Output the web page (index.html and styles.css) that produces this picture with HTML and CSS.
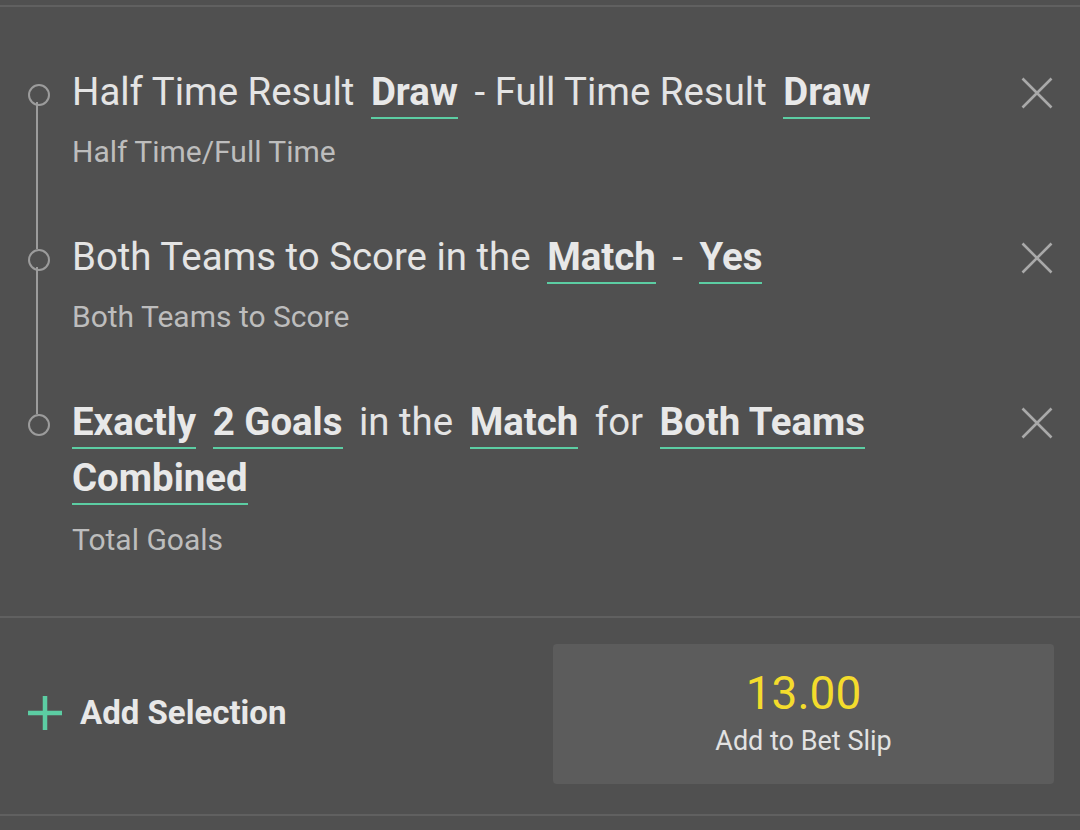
FILE: index.html
```html
<!DOCTYPE html>
<html lang="en">
<head>
<meta charset="utf-8">
<title>Bet Builder</title>
<link rel="stylesheet" href="styles.css">
</head>
<body>
<div class="page">
  <div class="topline"></div>
  <ul class="legs">
    <li class="leg">
      <div class="leg-body">
        <p class="leg-title"><span class="seg">Half Time Result</span><span class="pick">Draw</span><span class="seg">- Full Time Result</span><span class="pick">Draw</span></p>
        <p class="leg-market">Half Time/Full Time</p>
      </div>
      <button class="remove" aria-label="Remove">
        <svg width="32" height="32" viewBox="0 0 32 32"><path d="M1.5 1.5 L30.5 30.5 M30.5 1.5 L1.5 30.5" stroke="#a9a9a9" stroke-width="2.6" fill="none"/></svg>
      </button>
    </li>
    <li class="leg">
      <div class="leg-body">
        <p class="leg-title"><span class="seg">Both Teams to Score in the</span><span class="pick">Match</span><span class="seg">-</span><span class="pick">Yes</span></p>
        <p class="leg-market">Both Teams to Score</p>
      </div>
      <button class="remove" aria-label="Remove">
        <svg width="32" height="32" viewBox="0 0 32 32"><path d="M1.5 1.5 L30.5 30.5 M30.5 1.5 L1.5 30.5" stroke="#a9a9a9" stroke-width="2.6" fill="none"/></svg>
      </button>
    </li>
    <li class="leg leg-tall">
      <div class="leg-body">
        <p class="leg-title"><span class="pick">Exactly</span><span class="pick">2 Goals</span><span class="seg">in the</span><span class="pick">Match</span><span class="seg">for</span><span class="pick">Both Teams Combined</span></p>
        <p class="leg-market">Total Goals</p>
      </div>
      <button class="remove" aria-label="Remove">
        <svg width="32" height="32" viewBox="0 0 32 32"><path d="M1.5 1.5 L30.5 30.5 M30.5 1.5 L1.5 30.5" stroke="#a9a9a9" stroke-width="2.6" fill="none"/></svg>
      </button>
    </li>
  </ul>
  <div class="footer">
    <button class="add-sel">
      <svg class="plus" width="34" height="34" viewBox="0 0 34 34"><path d="M17 0 V34 M0 17 H34" stroke="#5ccda3" stroke-width="4.5" fill="none"/></svg>
      <span>Add Selection</span>
    </button>
    <button class="betslip">
      <span class="odds">13.00</span>
      <span class="betslip-label">Add to Bet Slip</span>
    </button>
  </div>
  <div class="bottomline"></div>
</div>
</body>
</html>
```

FILE: styles.css
```css
* { box-sizing: border-box; }

html, body {
  margin: 0;
  padding: 0;
  background: #505050;
  font-family: Roboto, "Liberation Sans", sans-serif;
}

.page {
  width: 1080px;
  min-height: 830px;
  background: #505050;
  padding-top: 5px;
}

.topline {
  height: 2px;
  background: #606060;
}

.legs {
  list-style: none;
  margin: 0;
  padding: 57px 0 56px 0;
}

.leg {
  position: relative;
  display: flex;
  align-items: flex-start;
  margin-bottom: 57px;
}

.leg:last-child { margin-bottom: 0; }

.leg::before {
  content: "";
  position: absolute;
  left: 28px;
  top: 20px;
  width: 18px;
  height: 18px;
  border: 2px solid #9c9c9c;
  border-radius: 50%;
  background: #505050;
}

.leg:not(:last-child)::after {
  content: "";
  position: absolute;
  left: 36px;
  top: 38px;
  width: 2px;
  height: 147px;
  background: #9c9c9c;
}

.leg-body {
  flex: 1;
  padding-left: 72px;
  padding-right: 20px;
}

.leg-title {
  margin: 0;
  font-size: 38.4px;
  line-height: 56px;
  color: #e4e4e4;
}

.seg,
.pick {
  margin-right: 16.5px;
}

.leg-title > :last-child { margin-right: 0; }

.pick {
  font-weight: 700;
  color: #e8e8e8;
  padding-bottom: 3px;
  border-bottom: 2px solid #5ccda3;
}

.leg-market {
  margin: 12px 0 0 0;
  font-size: 30px;
  line-height: 40px;
  color: #bdbdbd;
}

.leg-tall .leg-market { margin-top: 14px; }

.remove {
  flex: none;
  margin: 13px 27px 0 0;
  padding: 0;
  border: 0;
  background: none;
  width: 32px;
  height: 32px;
  display: block;
}

.remove svg { display: block; }

.footer {
  border-top: 2px solid #606060;
  display: flex;
  align-items: center;
  justify-content: space-between;
  padding: 26px 26px 30px 28px;
}

.add-sel {
  display: flex;
  align-items: center;
  gap: 18px;
  padding: 0 0 3px 0;
  border: 0;
  background: none;
  font-family: inherit;
  font-size: 33px;
  font-weight: 700;
  color: #e8e8e8;
}

.plus { display: block; }

.betslip {
  width: 501px;
  height: 140px;
  border: 0;
  border-radius: 4px;
  background: #5c5c5c;
  display: flex;
  flex-direction: column;
  align-items: center;
  justify-content: center;
  font-family: inherit;
  padding: 0 0 2px 0;
}

.odds {
  font-size: 46px;
  line-height: 52px;
  color: #f4dc2c;
}

.betslip-label {
  font-size: 27px;
  line-height: 36px;
  color: #e2e2e2;
  margin-top: 4px;
}

.bottomline {
  height: 2px;
  background: #606060;
}
```
